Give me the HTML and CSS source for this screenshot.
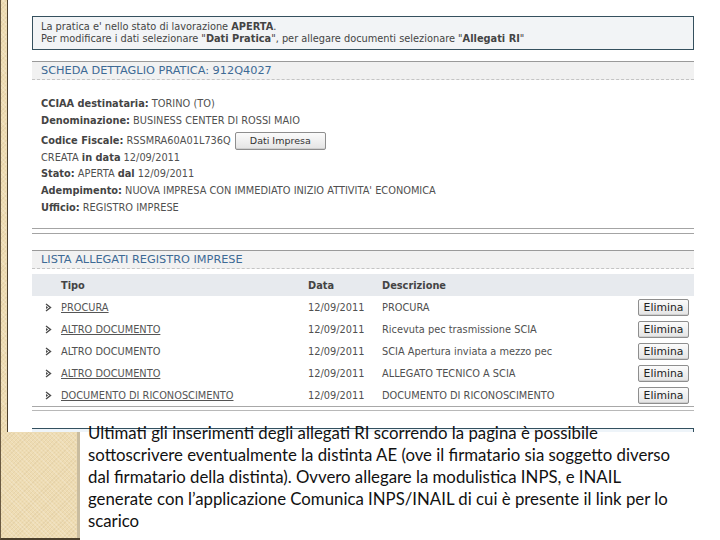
FILE: index.html
```html
<!DOCTYPE html>
<html lang="it">
<head>
<meta charset="utf-8">
<title>Scheda dettaglio pratica</title>
<link rel="stylesheet" href="styles.css">
</head>
<body>
<div class="slide">
  <div class="sidebar"></div>

  <div class="shot">
    <div class="info">
      <div>La pratica e' nello stato di lavorazione <b>APERTA</b>.</div>
      <div>Per modificare i dati selezionare "<b>Dati Pratica</b>", per allegare documenti selezionare "<b>Allegati RI</b>"</div>
    </div>

    <div class="sec-head">SCHEDA DETTAGLIO PRATICA: 912Q4027</div>

    <div class="details">
      <div class="row"><b>CCIAA destinataria:</b> TORINO (TO)</div>
      <div class="row"><b>Denominazione:</b> BUSINESS CENTER DI ROSSI MAIO</div>
      <div class="row row-btn"><span><b>Codice Fiscale:</b> RSSMRA60A01L736Q</span><span class="btn btn-wide">Dati Impresa</span></div>
      <div class="row">CREATA <b>in data</b> 12/09/2011</div>
      <div class="row"><b>Stato:</b> APERTA <b>dal</b> 12/09/2011</div>
      <div class="row"><b>Adempimento:</b> NUOVA IMPRESA CON IMMEDIATO INIZIO ATTIVITA' ECONOMICA</div>
      <div class="row"><b>Ufficio:</b> REGISTRO IMPRESE</div>
    </div>

    <div class="double"></div>

    <div class="sec-head sec-head2">LISTA ALLEGATI REGISTRO IMPRESE</div>

    <div class="table">
      <div class="thead">
        <span class="c-ico"></span>
        <span class="c-tipo">Tipo</span>
        <span class="c-data">Data</span>
        <span class="c-desc">Descrizione</span>
        <span class="c-btn"></span>
      </div>
      <div class="trow">
        <span class="c-ico"><svg width="7" height="9" viewBox="0 0 7 9"><path d="M1 1 L5.5 4.5 L1 8" fill="none" stroke="#4a4a4a" stroke-width="1.4"/><path d="M1 3 L3.2 4.5 L1 6 Z" fill="#4a4a4a"/></svg></span>
        <span class="c-tipo"><a>PROCURA</a></span>
        <span class="c-data">12/09/2011</span>
        <span class="c-desc">PROCURA</span>
        <span class="c-btn"><span class="btn">Elimina</span></span>
      </div>
      <div class="trow">
        <span class="c-ico"><svg width="7" height="9" viewBox="0 0 7 9"><path d="M1 1 L5.5 4.5 L1 8" fill="none" stroke="#4a4a4a" stroke-width="1.4"/><path d="M1 3 L3.2 4.5 L1 6 Z" fill="#4a4a4a"/></svg></span>
        <span class="c-tipo"><a>ALTRO DOCUMENTO</a></span>
        <span class="c-data">12/09/2011</span>
        <span class="c-desc">Ricevuta pec trasmissione SCIA</span>
        <span class="c-btn"><span class="btn">Elimina</span></span>
      </div>
      <div class="trow">
        <span class="c-ico"><svg width="7" height="9" viewBox="0 0 7 9"><path d="M1 1 L5.5 4.5 L1 8" fill="none" stroke="#4a4a4a" stroke-width="1.4"/><path d="M1 3 L3.2 4.5 L1 6 Z" fill="#4a4a4a"/></svg></span>
        <span class="c-tipo">ALTRO DOCUMENTO</span>
        <span class="c-data">12/09/2011</span>
        <span class="c-desc">SCIA Apertura inviata a mezzo pec</span>
        <span class="c-btn"><span class="btn">Elimina</span></span>
      </div>
      <div class="trow">
        <span class="c-ico"><svg width="7" height="9" viewBox="0 0 7 9"><path d="M1 1 L5.5 4.5 L1 8" fill="none" stroke="#4a4a4a" stroke-width="1.4"/><path d="M1 3 L3.2 4.5 L1 6 Z" fill="#4a4a4a"/></svg></span>
        <span class="c-tipo"><a>ALTRO DOCUMENTO</a></span>
        <span class="c-data">12/09/2011</span>
        <span class="c-desc">ALLEGATO TECNICO A SCIA</span>
        <span class="c-btn"><span class="btn">Elimina</span></span>
      </div>
      <div class="trow">
        <span class="c-ico"><svg width="7" height="9" viewBox="0 0 7 9"><path d="M1 1 L5.5 4.5 L1 8" fill="none" stroke="#4a4a4a" stroke-width="1.4"/><path d="M1 3 L3.2 4.5 L1 6 Z" fill="#4a4a4a"/></svg></span>
        <span class="c-tipo"><a>DOCUMENTO DI RICONOSCIMENTO</a></span>
        <span class="c-data">12/09/2011</span>
        <span class="c-desc">DOCUMENTO DI RICONOSCIMENTO</span>
        <span class="c-btn"><span class="btn">Elimina</span></span>
      </div>
    </div>
    <div class="table-end"></div>

    <div class="next-box"></div>
  </div>

  <div class="caption">
    Ultimati gli inserimenti degli allegati RI scorrendo la pagina è possibile<br>
    sottoscrivere eventualmente la distinta AE (ove il firmatario sia soggetto diverso<br>
    dal firmatario della distinta). Ovvero allegare la modulistica INPS, e INAIL<br>
    generate con l’applicazione Comunica INPS/INAIL di cui è presente il link per lo<br>
    scarico
  </div>
</div>
</body>
</html>
```

FILE: styles.css
```css
* { box-sizing: border-box; }

html, body {
  margin: 0;
  padding: 0;
  background: #ffffff;
}

.slide {
  position: relative;
  width: 720px;
  height: 540px;
  overflow: hidden;
  background: #ffffff;
}

.sidebar {
  position: absolute;
  left: 0;
  top: 0;
  width: 80px;
  height: 540px;
  background-color: #eedcb3;
  background-image:
    repeating-linear-gradient(45deg, rgba(255,255,255,0.18) 0 1px, transparent 1px 3px),
    repeating-linear-gradient(-45deg, rgba(160,130,80,0.10) 0 1px, transparent 1px 3px);
  border-left: 1px solid #6a5a42;
  border-bottom: 2px solid #4b3f2c;
  box-shadow: inset -3px 0 0 #c9bc9f;
}

.shot {
  position: absolute;
  left: 7px;
  top: 0;
  width: 690px;
  height: 432px;
  overflow: hidden;
  background: #ffffff;
  border-left: 1px solid #4d402d;
  padding: 16px 3px 0 24px;
  font-family: "DejaVu Sans", Verdana, sans-serif;
  font-size: 9.8px;
  color: #505050;
}

.shot b { color: #444; }

.info {
  height: 34px;
  border: 1px solid #35505e;
  background: #f2f4f6;
  padding: 4px 8px;
  line-height: 12px;
  color: #444;
}

.sec-head {
  margin-top: 11px;
  height: 19px;
  border-top: 1px solid #9a9a9a;
  border-bottom: 1px dashed #c4c4c4;
  background: #f1f1f1;
  padding-left: 9px;
  font-size: 11.3px;
  line-height: 17px;
  color: #3d6a95;
}

.details {
  margin-top: 16px;
  padding-left: 9px;
}

.row {
  height: 16.6px;
  line-height: 16.6px;
  white-space: nowrap;
}

.row-btn {
  margin-top: 4px;
  display: flex;
  align-items: center;
}

.btn {
  display: inline-flex;
  align-items: center;
  justify-content: center;
  height: 17px;
  border: 1px solid #8e8e8e;
  border-radius: 2px;
  background: linear-gradient(#fbfbfb, #e4e4e4);
  color: #333;
  font-size: 9.5px;
  box-shadow: inset 0 -1px 0 #cfcfcf;
}

.btn-wide {
  width: 91px;
  height: 18px;
  margin-left: 4px;
}

.double {
  margin-top: 12px;
  height: 6px;
  border-top: 1px solid #a4a4a4;
  border-bottom: 1px solid #a4a4a4;
}

.sec-head2 { margin-top: 16px; }

.table { margin-top: 5px; }

.thead, .trow {
  display: flex;
  align-items: center;
}

.thead {
  height: 22px;
  background: #e7eaee;
  font-weight: bold;
  color: #444;
}

.trow { height: 22px; }

.c-ico {
  width: 29px;
  padding-left: 13px;
  display: flex;
  align-items: center;
}

.c-tipo { width: 247px; white-space: nowrap; }
.c-data { width: 74px; white-space: nowrap; }
.c-desc { width: 256px; white-space: nowrap; }
.c-btn {
  width: 56px;
  display: flex;
}
.c-btn .btn {
  width: 51px;
  font-size: 10.8px;
  color: #222;
}

.trow a {
  color: #555;
  text-decoration: underline;
}

.table-end {
  height: 5px;
  border-top: 1px solid #a8a8a8;
  border-bottom: 1px solid #b8b8b8;
}

.next-box {
  margin-top: 17px;
  height: 20px;
  border-top: 1px solid #33505f;
  border-right: 1px solid #33505f;
  background: #eef4f9;
}

.caption {
  position: absolute;
  left: 88px;
  top: 422px;
  width: 632px;
  font-family: Lato, "Open Sans", sans-serif;
  font-size: 16.8px;
  line-height: 22px;
  color: #111;
  white-space: nowrap;
}
```
